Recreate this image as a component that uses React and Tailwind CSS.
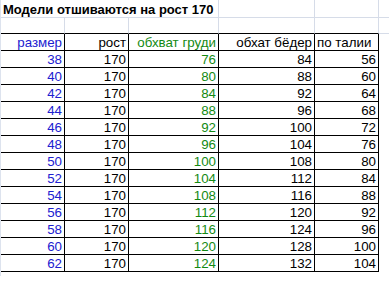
import React from "react";

const rows = [
  [38, 170, 76, 84, 56],
  [40, 170, 80, 88, 60],
  [42, 170, 84, 92, 64],
  [44, 170, 88, 96, 68],
  [46, 170, 92, 100, 72],
  [48, 170, 96, 104, 76],
  [50, 170, 100, 108, 80],
  [52, 170, 104, 112, 84],
  [54, 170, 108, 116, 88],
  [56, 170, 112, 120, 92],
  [58, 170, 116, 124, 96],
  [60, 170, 120, 128, 100],
  [62, 170, 124, 132, 104],
];

const cell = "flex items-end justify-end pr-[2px] h-full border-r border-b border-black";

export default function App() {
  return (
    <div
      className="w-[389px] h-[284px] bg-white text-[13.33px] leading-[15px] text-black overflow-hidden"
      style={{ fontFamily: '"Liberation Sans", Arial, sans-serif' }}
    >
      <div className="border-l border-[#dde3ee]">
        {/* Row 1: title */}
        <div className="flex h-[18px] border-b border-[#d6dce8]">
          <div className="w-[218px] shrink-0 flex items-end pl-[2px] border-r border-[#d6dce8] font-bold text-[13px] whitespace-nowrap">
            Модели отшиваются на рост 170
          </div>
          <div className="w-[96px] shrink-0 border-r border-[#d6dce8]" />
          <div className="w-[64px] shrink-0 border-r border-[#d6dce8]" />
          <div className="flex-1" />
        </div>
        {/* Row 2: empty */}
        <div className="flex h-[16px]">
          <div className="w-[64px] shrink-0 border-r border-[#d6dce8] border-b border-b-black" />
          <div className="w-[64px] shrink-0 border-r border-[#d6dce8] border-b border-b-black" />
          <div className="w-[90px] shrink-0 border-r border-[#d6dce8] border-b border-b-black" />
          <div className="w-[96px] shrink-0 border-r border-[#d6dce8] border-b border-b-black" />
          <div className="w-[64px] shrink-0 border-r border-[#d6dce8] border-b border-b-black" />
          <div className="flex-1 border-b border-[#d6dce8]" />
        </div>
        {/* Header row */}
        <div className="flex h-[17px]">
          <div className={`w-[64px] shrink-0 text-[#2020d0] ${cell}`}>размер</div>
          <div className={`w-[64px] shrink-0 ${cell}`}>рост</div>
          <div className={`w-[90px] shrink-0 text-[#138a13] ${cell}`}>обхват груди</div>
          <div className={`w-[96px] shrink-0 ${cell}`}>обхат бёдер</div>
          <div className="w-[64px] shrink-0 flex items-end pl-[2px] h-full border-r border-b border-black whitespace-nowrap">
            по талии
          </div>
          <div className="flex-1" />
        </div>
        {rows.map((r) => (
          <div key={r[0]} className="flex h-[17px]">
            <div className={`w-[64px] shrink-0 text-[#2020d0] ${cell}`}>{r[0]}</div>
            <div className={`w-[64px] shrink-0 ${cell}`}>{r[1]}</div>
            <div className={`w-[90px] shrink-0 text-[#138a13] ${cell}`}>{r[2]}</div>
            <div className={`w-[96px] shrink-0 ${cell}`}>{r[3]}</div>
            <div className={`w-[64px] shrink-0 ${cell}`}>{r[4]}</div>
            <div className="flex-1" />
          </div>
        ))}
        <div className="h-[4px]" />
      </div>
    </div>
  );
}
